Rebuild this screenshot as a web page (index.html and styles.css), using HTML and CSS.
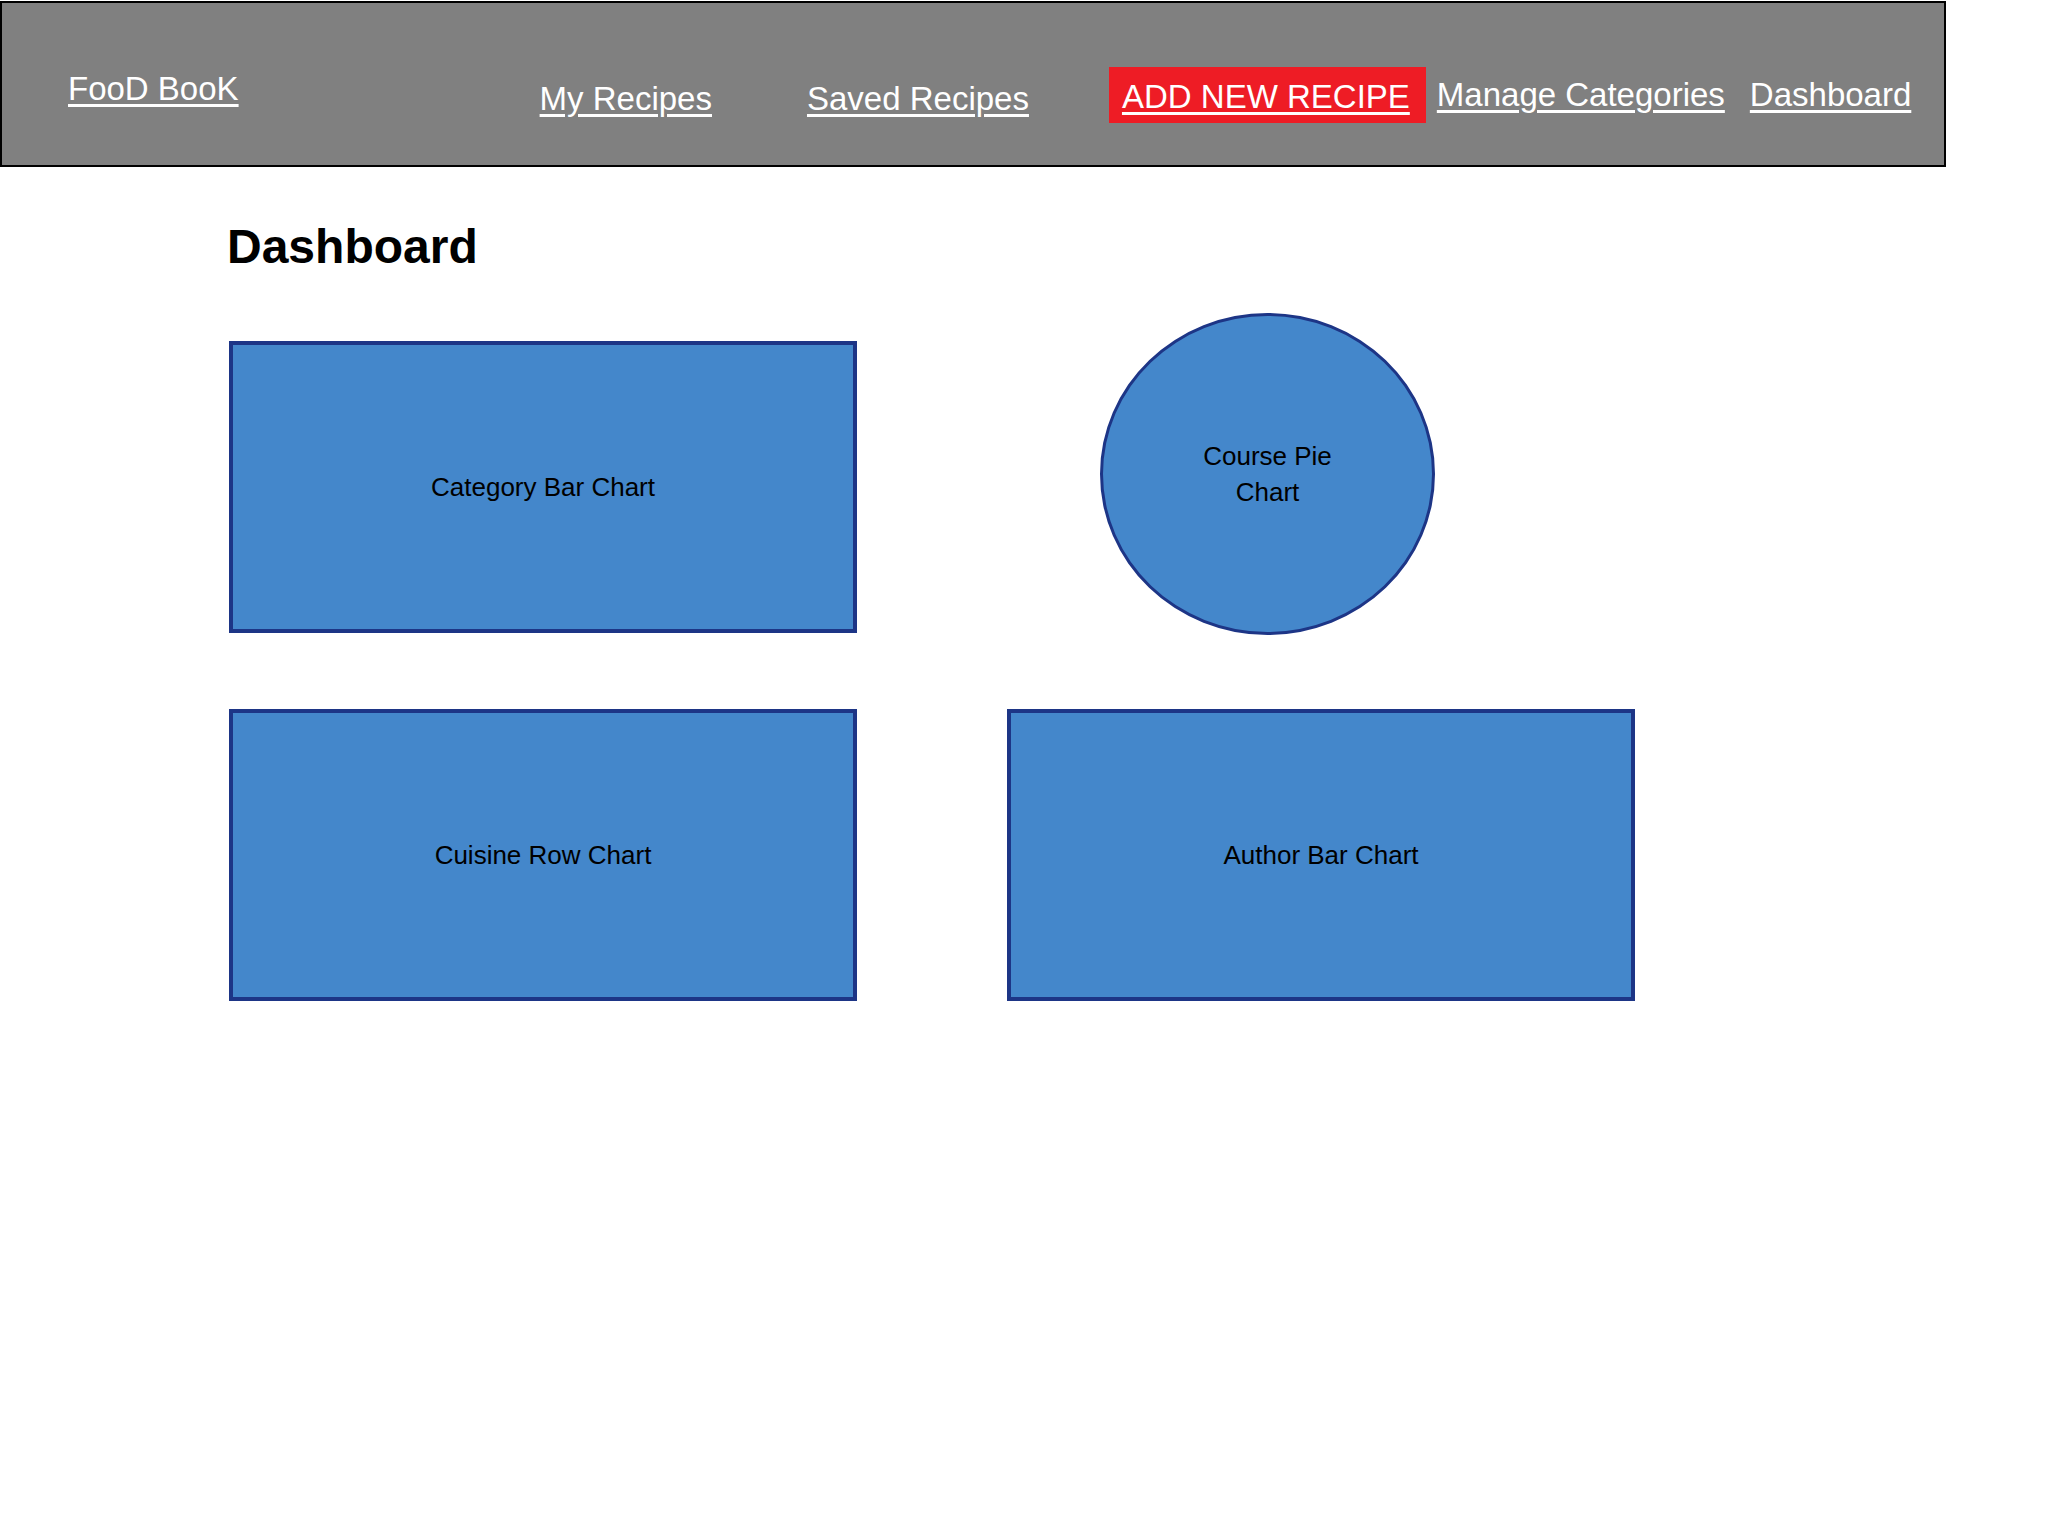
FILE: index.html
```html
<!DOCTYPE html>
<html>
<head>
<meta charset="utf-8">
<title>FooD BooK - Dashboard</title>
<link rel="stylesheet" href="styles.css">
</head>
<body>
<header class="topbar">
  <a class="brand" href="#">FooD BooK</a>
  <a class="nav-link nav-my" href="#">My Recipes</a>
  <a class="nav-link nav-saved" href="#">Saved Recipes</a>
  <a class="nav-add" href="#"><span>ADD NEW RECIPE</span></a>
  <a class="nav-link nav-manage" href="#">Manage Categories</a>
  <a class="nav-link nav-dash" href="#">Dashboard</a>
</header>
<main class="content">
  <h1 class="page-title">Dashboard</h1>
  <section class="charts">
    <div class="chart-box box-first"><span>Category Bar Chart</span></div>
    <div class="chart-cell"><div class="chart-pie"><span>Course Pie Chart</span></div></div>
    <div class="chart-box"><span>Cuisine Row Chart</span></div>
    <div class="chart-box"><span>Author Bar Chart</span></div>
  </section>
</main>
</body>
</html>
```

FILE: styles.css
```css
html, body {
  margin: 0;
  padding: 0;
  background: #ffffff;
}

body {
  font-family: "Liberation Sans", Arial, sans-serif;
  color: #000000;
}

.topbar {
  box-sizing: border-box;
  width: 1946px;
  height: 166px;
  margin-top: 1px;
  background: #808080;
  border: 2px solid #000000;
  display: flex;
  align-items: flex-start;
  padding-left: 66px;
}

.topbar a {
  color: #ffffff;
  font-family: "Comic Sans MS", "Liberation Sans", sans-serif;
  font-size: 33px;
  line-height: 33px;
  text-decoration: underline;
  text-decoration-thickness: 3px;
  text-underline-offset: 4px;
  white-space: nowrap;
}

.brand {
  margin-top: 69px;
}

.nav-my {
  margin-top: 79px;
  margin-left: 301px;
}

.nav-saved {
  margin-top: 79px;
  margin-left: 95px;
}

.nav-add {
  margin-top: 64px;
  margin-left: 80px;
  background: #ee1c25;
  padding: 13px 16px 10px 13px;
}

.nav-manage {
  margin-top: 75px;
  margin-left: 11px;
}

.nav-dash {
  margin-top: 75px;
  margin-left: 25px;
}

.content {
  padding-left: 229px;
}

.page-title {
  margin: 56px 0 0 -2px;
  font-size: 48px;
  line-height: 48px;
  font-weight: bold;
}

.charts {
  margin-top: 42px;
  display: grid;
  grid-template-columns: 628px 628px;
  column-gap: 150px;
  row-gap: 74px;
  align-items: end;
}

.chart-box {
  box-sizing: border-box;
  height: 292px;
  background: #4487cb;
  border: 4px solid #1d3586;
  display: flex;
  align-items: center;
  justify-content: center;
  font-size: 26px;
  line-height: 36px;
  text-align: center;
}

.box-first {
  margin-bottom: 2px;
}

.chart-cell {
  display: flex;
}

.chart-pie {
  box-sizing: border-box;
  margin-left: 93px;
  width: 335px;
  height: 322px;
  border-radius: 50%;
  background: #4487cb;
  border: 3px solid #1d3586;
  display: flex;
  align-items: center;
  justify-content: center;
  font-size: 26px;
  line-height: 36px;
  text-align: center;
}

.chart-pie span {
  max-width: 150px;
}
```
